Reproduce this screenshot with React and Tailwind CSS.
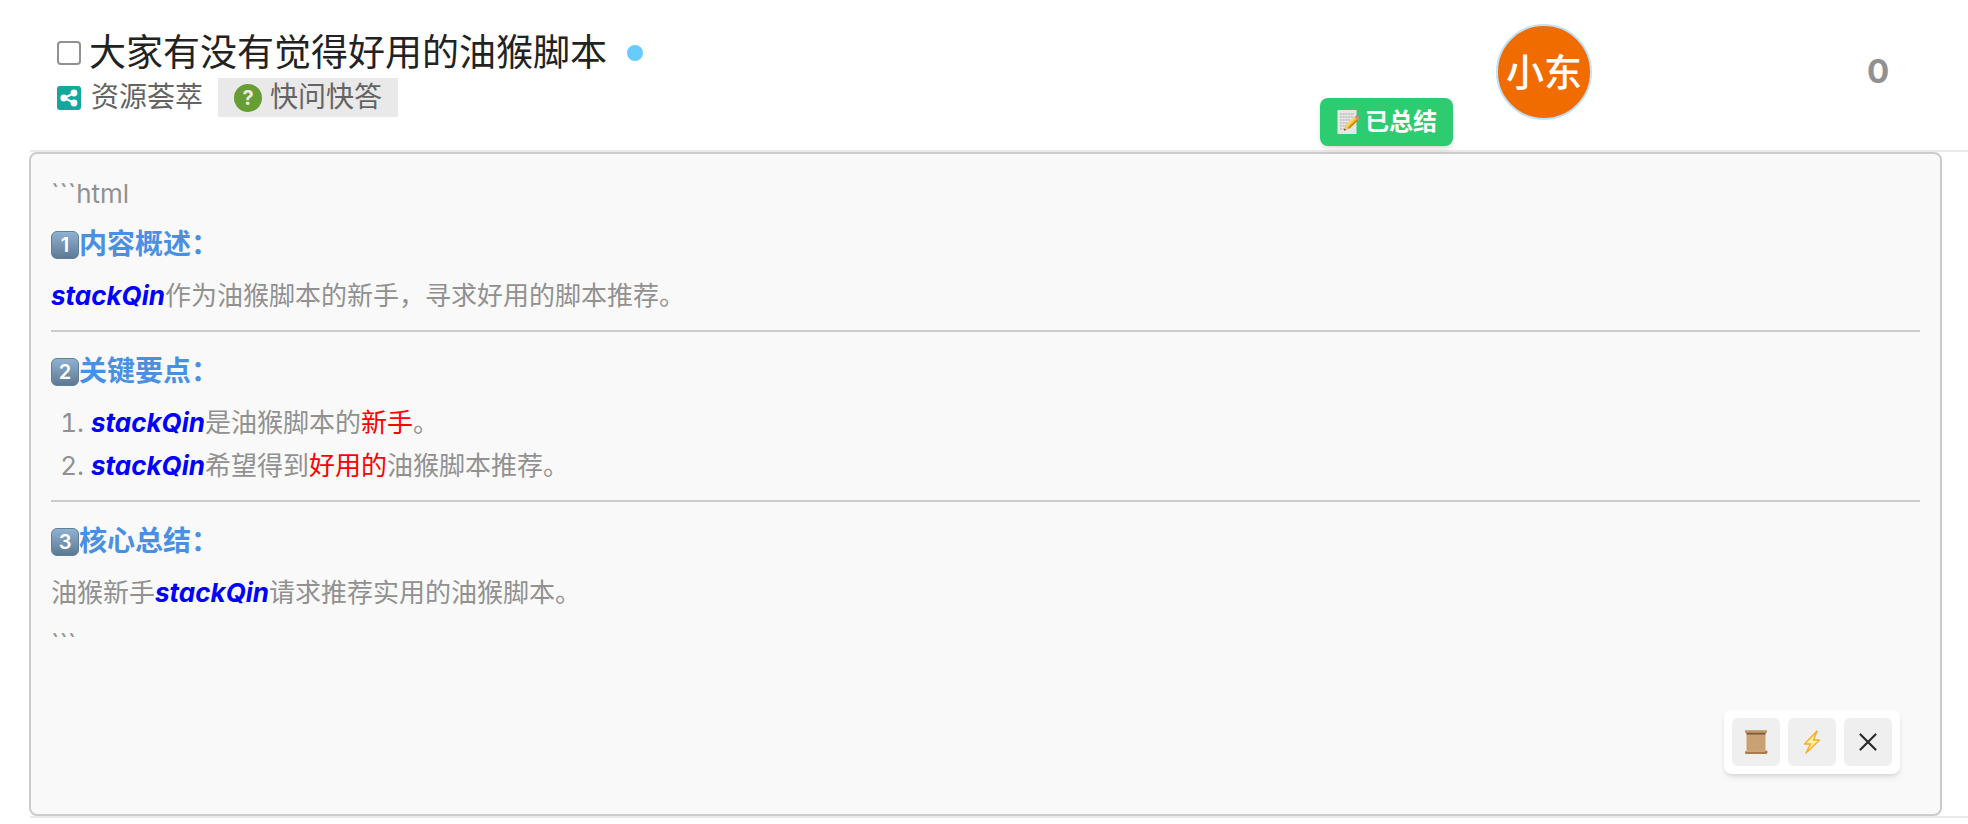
const font = "font-['Inter','Noto_Sans_CJK_SC',sans-serif]"

function ShareIcon() {
  return (
    <svg viewBox="0 0 24 24" className="size-6 shrink-0" aria-hidden="true">
      <rect width="24" height="24" rx="3" fill="#12a89d" />
      <path d="M17 7 7.5 12 17 17" fill="none" stroke="#fff" strokeWidth="2" />
      <circle cx="17" cy="7" r="3.4" fill="#fff" />
      <circle cx="6.8" cy="12" r="3.4" fill="#fff" />
      <circle cx="17" cy="17" r="3.4" fill="#fff" />
    </svg>
  )
}

function QuestionIcon() {
  return (
    <span className="flex size-7 shrink-0 items-center justify-center rounded-full bg-[#669d34] text-xl font-bold text-[#e9e9e9]">
      ?
    </span>
  )
}

function MemoIcon() {
  return (
    <svg viewBox="0 0 24 24" className="size-6 shrink-0" aria-hidden="true">
      <path d="M1.5 0h19v24h-19z" fill="#e6e6e4" />
      <path
        d="M4 4h14M4 7h13M4 10h11M4 13h8M4 16h6M4 19h4"
        stroke="#a9a9a9"
        strokeWidth="1"
        strokeDasharray="2 .7"
      />
      <path d="m8 20.500 1.500-5L18.500 7l3.500 3.500L13 19z" fill="#f5b81f" />
      <path d="m9.500 15.500 9-8.500 1.200 1.200L11 17z" fill="#ffd95e" />
      <path d="m13 19 9-8.500-1.200-1.200L12 18z" fill="#c98411" />
      <path d="m18.500 7 1.500-1.300q1-.6 2 .5l1 1q.8 1-.2 2L22 10.500z" fill="#ec7f86" />
      <path d="m8 20.500 1.500-5 3.500 3.500z" fill="#e9c48f" />
      <path d="m8 20.500 .6-2 1.400 1.400z" fill="#333" />
    </svg>
  )
}

function ScrollIcon() {
  return (
    <svg viewBox="0 0 24 24" className="size-6" aria-hidden="true">
      <path d="M2.500 3h19v18h-19z" fill="#c8a275" />
      <path d="M1.500 0h21q1 1.500 0 3h-21q-1-1.500 0-3z" fill="#b98d5c" />
      <path d="M2 .8h20" stroke="#d9b98c" strokeWidth=".8" />
      <path d="M2.500 3h19v1.500h-19z" fill="#765a3c" />
      <path d="M1.500 21H21l2-.6q1.200 1.600 0 3.100l-1 .5H1.500q-.8-1.500 0-3z" fill="#a97c4c" />
      <path d="M2 21.300h19" stroke="#dcbd90" strokeWidth=".8" />
    </svg>
  )
}

function BoltIcon() {
  return (
    <svg viewBox="0 0 24 24" className="size-6" aria-hidden="true">
      <path
        d="M17 1 4.500 14h6L6 23 19.500 10h-6z"
        fill="#fff3a0"
        stroke="#f9ae2b"
        strokeWidth="1.500"
        strokeLinejoin="round"
      />
    </svg>
  )
}

function CloseIcon() {
  return (
    <svg viewBox="0 0 24 24" className="size-6" aria-hidden="true">
      <path d="m4.500 4.500 15 15m0-15-15 15" stroke="#2b2b2b" strokeWidth="2.200" strokeLinecap="round" />
    </svg>
  )
}

function SectionTitle({ number, children }) {
  return (
    <h3 className="flex h-[43px] items-center text-[28px] font-bold text-[#4a90e2]">
      <span className="flex size-7 items-center justify-center rounded-md border border-[#5f7f9b] bg-linear-to-b from-[#8fb2d1] to-[#5d7a94] text-xl leading-none font-semibold text-white">
        {number}
      </span>
      {children}
    </h3>
  )
}

function User() {
  return <strong className="font-bold text-[#0000ff] italic">stackQin</strong>
}

function Mark({ children }) {
  return <span className="text-[#ff0000]">{children}</span>
}

function Divider() {
  return <hr className="mt-[13px] mb-[18px] border-t-2 border-[#ccc]" />
}

function ToolButton({ label, children }) {
  return (
    <button type="button" aria-label={label} className="flex size-12 items-center justify-center rounded-md bg-[#efefef]">
      {children}
    </button>
  )
}

function TopicRow() {
  return (
    <header className="ml-[30px] flex h-[152px] border-b-2 border-[#e9e9e9]">
      <div className="flex flex-1 flex-col pt-7 pl-[27px]">
        <div className="flex h-[50px] items-center">
          <input
            type="checkbox"
            id="topic-select"
            aria-label="大家有没有觉得好用的油猴脚本"
            className="size-6 appearance-none rounded-sm border-2 border-[#919191] bg-white"
          />
          <a href="#topic" className="ml-2 text-[37px] leading-[50px] text-[#222]">
            大家有没有觉得好用的油猴脚本
          </a>
          <span className="ml-5 size-4 rounded-full bg-[#66ccff]" />
        </div>
        <div className="flex h-[39px] items-center text-[28px] leading-[39px] text-[#646464]">
          <a href="#category" className="flex items-center gap-2.5">
            <ShareIcon />
            资源荟萃
          </a>
          <a href="#tag" className="ml-[15px] flex items-center gap-2 bg-[#e9e9e9] px-4">
            <QuestionIcon />
            快问快答
          </a>
        </div>
      </div>
      <button
        type="button"
        className="mt-[98px] mr-[43px] flex h-12 items-center gap-[5px] rounded-lg bg-[#2ecc71] px-4 text-2xl font-bold text-white shadow-md"
      >
        <MemoIcon />
        已总结
      </button>
      <div className="mt-6 flex size-24 items-center justify-center rounded-full border-2 border-[#bfe3fb] bg-[#f16c00] text-[38px] font-medium text-white">
        小东
      </div>
      <div className="ml-[186px] w-[190px] pl-[89px] pt-[46px] text-[33px] leading-[50px] font-bold text-[#919191]">0</div>
    </header>
  )
}

export default function App() {
  return (
    <div className={`bg-white pb-1.5 ${font}`}>
      <TopicRow />
      <main className="mr-[26px] ml-[29px] rounded-lg border-2 border-[#ccc] bg-[#f9f9f9] px-5 pt-[18px] pb-10 text-[26px] leading-[43px] text-[#919191]">
        <div className="flex flex-col gap-2">
          <p>```html</p>
          <SectionTitle number={1}>内容概述：</SectionTitle>
          <p>
            <User />
            作为油猴脚本的新手，寻求好用的脚本推荐。
          </p>
        </div>
        <Divider />
        <div className="flex flex-col gap-2">
          <SectionTitle number={2}>关键要点：</SectionTitle>
          <ol className="list-decimal pl-10">
            <li>
              <User />
              是油猴脚本的<Mark>新手</Mark>。
            </li>
            <li>
              <User />
              希望得到<Mark>好用的</Mark>油猴脚本推荐。
            </li>
          </ol>
        </div>
        <Divider />
        <div className="flex flex-col gap-2">
          <SectionTitle number={3}>核心总结：</SectionTitle>
          <p>
            油猴新手
            <User />
            请求推荐实用的油猴脚本。
          </p>
          <p>```</p>
        </div>
        <div className="mt-[45px] mr-5 ml-auto flex w-fit gap-2 rounded-lg bg-white p-2 shadow-md">
          <ToolButton label="总结">
            <ScrollIcon />
          </ToolButton>
          <ToolButton label="重新生成">
            <BoltIcon />
          </ToolButton>
          <ToolButton label="关闭">
            <CloseIcon />
          </ToolButton>
        </div>
      </main>
      <div className="ml-[30px] h-0.5 bg-[#e9e9e9]" />
    </div>
  )
}
